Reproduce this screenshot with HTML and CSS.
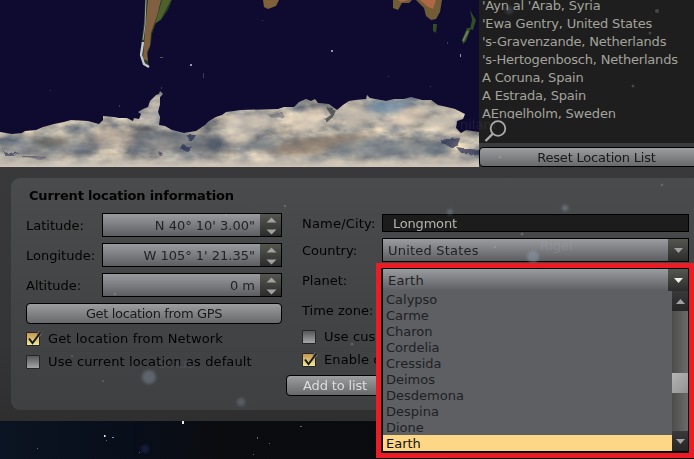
FILE: index.html
```html
<!DOCTYPE html>
<html lang="en">
<head>
<meta charset="utf-8">
<title>Location</title>
<link rel="stylesheet" href="styles.css">
</head>
<body>
<main class="window">
  <section class="top">
    <svg class="map" width="479" height="167" viewBox="0 0 479 167">
      <defs>
        <filter id="rough" x="-5%" y="-5%" width="110%" height="110%">
          <feTurbulence type="fractalNoise" baseFrequency=".14" numOctaves="3" seed="4" result="n"/>
          <feDisplacementMap in="SourceGraphic" in2="n" scale="5"/>
        </filter>
        <filter id="cloud" x="0" y="0" width="100%" height="100%" color-interpolation-filters="sRGB">
          <feTurbulence type="fractalNoise" baseFrequency=".04 .08" numOctaves="5" seed="12"/>
          <feColorMatrix values=".85 0 0 0 .22  .72 .06 0 0 .24  .5 .12 0 0 .29  0 0 0 0 1"/>
        </filter>
        <filter id="soft" x="-30%" y="-50%" width="160%" height="200%"><feGaussianBlur stdDeviation="5 2.5"/></filter>
        <filter id="smooth"><feGaussianBlur stdDeviation=".6"/></filter>
        <clipPath id="ice"><path d="M0 132L12 134 22 133 25 131 36 130 43 127 54 124 64 122 71 120 88 121 99 124 103 120 103 116 114 117 119 118 127 118 133 121 134 118 139 119 141 114 138 112 143 109 148 107 150 101 153 98 156 95 159 94 160 91 163 94 160 97 160 104 158 112 160 117 159 125 165 126 172 130 184 133 196 131 205 125 209 121 216 117 222 115 226 112 234 111 240 110 278 109 284 107 294 107 299 102 306 99 311 101 315 99 318 103 329 104 337 110 343 105 349 101 355 100 366 99 367 95 370 98 386 101 394 99 404 99 411 97 422 100 431 100 438 105 447 107 455 109 461 112 465 114 463 119 457 121 456 128 461 133 466 130 479 132V167H0Z"/></clipPath>
        <linearGradient id="edge" x2="0" y2="1"><stop offset=".65" stop-color="#cfc6b8" stop-opacity="0"/><stop offset="1" stop-color="#cfc6b8"/></linearGradient>
      </defs>
      <rect width="479" height="167" fill="#0e0a30"/>
      <g clip-path="url(#ice)">
        <rect y="85" width="479" height="82" filter="url(#cloud)"/>
        <g filter="url(#soft)">
          <path fill="#626d7c" opacity=".5" d="M0 139H85L90 156H0Z"/>
          <path fill="#6b6459" opacity=".6" d="M32 138H70L65 146H36Z"/>
          <path fill="#4b5566" opacity=".6" d="M135 133L175 131 225 140 230 153 130 150Z"/>
          <path fill="#b9a694" opacity=".5" d="M92 132L125 127 130 146 90 148Z"/>
          <path fill="#d8ccba" opacity=".6" d="M224 118L265 113 285 124 230 145Z"/>
          <path fill="#89796a" opacity=".7" d="M255 151L300 138 375 133 350 146 300 156Z"/>
          <path fill="#6f7984" opacity=".65" d="M240 141H278V150H240ZM340 141H445V155H330Z"/>
          <path fill="#ecd9c0" opacity=".7" d="M381 126L405 108 430 107 415 124ZM295 115L322 106 320 128 290 132Z"/>
          <path fill="#6d91b2" opacity=".65" d="M372 101H413L398 113 365 113Z"/>
          <path fill="#d2c6b5" opacity=".7" d="M335 110L355 101 380 120 350 130ZM420 118L457 110 458 128 425 130Z"/>
          <path fill="#c6bfb7" opacity=".6" d="M155 96L162 92 159 124 145 124Z"/>
        </g>
        <path fill="#34383e" opacity=".7" filter="url(#rough)" d="M326 107L336 110 333 117 327 122 325 119 331 115Z"/>
        <g filter="url(#rough)" fill="#202750">
          <path d="M4 152L11 154 19 152 14 156 5 156ZM22 156L34 156 47 157 44 159 22 158ZM157 151L165 154 159 155ZM182 145L192 147 187 151 180 149ZM187 135H196L193 140 188 140ZM440 140L460 138 458 144 451 147 442 144ZM456 147L479 150V155L462 154Z" opacity=".65"/>
          <path d="M268 115L282 112 285 117 271 118Z" opacity=".3"/>
        </g>
        <rect y="128" width="479" height="39" fill="url(#edge)"/>
      </g>
      <g filter="url(#smooth)">
        <path fill="#263a20" d="M145 0H172L168 10 161 20 156 23 152 34 151 43 147 56 149 66 143 65 140 54 144 22Z"/>
        <path fill="#806140" d="M148 0H161L157 16 151 33 150 46 147 52 148 61 143 59 145 31Z"/>
        <path fill="#4d602d" d="M162 0H171L161 19 155 24Z"/>
        <path fill="none" stroke="#aeb1b1" stroke-width=".9" d="M146 0L145 25 143 40"/>
        <path fill="none" stroke="#c3c8d0" stroke-width="2.3" d="M143 42L141 55 144 64 149 67"/>
        <path fill="#7e613b" d="M263 0H279L276 6 268 9 264 7Z"/>
        <path fill="#705c35" d="M393 0L412 0 409 3 402 3 398 10 393 8ZM416 0H442L440 12 436 19 431 20 426 16 424 8Z"/>
        <path fill="#af6845" d="M398 0H409L401 2ZM420 0H436L433 9 428 7Z"/>
        <path fill="#2d4f20" d="M433 24H437L436 33 433 31ZM470 10L474 17 476 20 473 30 470 29 472 20ZM467 28L471 28 466 41 463 44 462 40Z"/>
        <path stroke="#747963" stroke-width="2" d="M463 41L468 31"/>
      </g>
      <g fill="#8c99ad"><path d="M331 50h2v2h-2zM190 64h2v2h-2zM460 54h1v3h-1z"/><path fill="#4b5b3c" d="M160 57h3v1h-3z"/><path opacity=".35" d="M262 20h1v1h-1zM447 42h1v2h-1zM50 90h1v1h-1zM119 105h1v2h-1zM203 73h1v5h-1zM430 86h1v1h-1zM161 87h1v2h-1zM388 76h1v1h-1z"/></g>
    </svg>
    <div class="places">
      <ul class="place-list">
        <li>'Ayn al 'Arab, Syria</li><li>'Ewa Gentry, United States</li><li>'s-Gravenzande, Netherlands</li><li>'s-Hertogenbosch, Netherlands</li><li>A Coruna, Spain</li><li>A Estrada, Spain</li><li>AEngelholm, Sweden</li>
      </ul>
      <div class="search"><svg width="30" height="24" viewBox="0 0 30 24" fill="none" stroke="#aaa"><circle cx="15" cy="9.5" r="7.3" stroke-width="1.8"/><path d="M10 14.5L2.5 22" stroke-width="2.4"/></svg></div>
      <button class="btn reset">Reset Location List</button>
    </div>
  </section>

  <section class="panel">
    <div class="left">
      <h1>Current location information</h1>
      <div class="row"><label>Latitude:</label><div class="spin"><span>N 40° 10' 3.00"</span><i><svg width="21" height="22" viewBox="0 0 21 22"><path d="M6.5 8.5L11.5 3.5 16.5 8.5ZM6.5 15.5H16.5L11.5 20.5Z"/></svg></i></div></div>
      <div class="row"><label>Longitude:</label><div class="spin"><span>W 105° 1' 21.35"</span><i><svg width="21" height="22" viewBox="0 0 21 22"><path d="M6.5 8.5L11.5 3.5 16.5 8.5ZM6.5 15.5H16.5L11.5 20.5Z"/></svg></i></div></div>
      <div class="row"><label>Altitude:</label><div class="spin"><span>0 m</span><i><svg width="21" height="22" viewBox="0 0 21 22"><path d="M6.5 8.5L11.5 3.5 16.5 8.5ZM6.5 15.5H16.5L11.5 20.5Z"/></svg></i></div></div>
      <button class="btn gps">Get location from GPS</button>
      <div class="check net"><b class="box on"><svg width="18" height="17" viewBox="0 0 18 17"><path d="M12 4.5L14.5 1.5" fill="none" stroke="#77766a" stroke-width="4"/><path d="M3 7.5L6.5 12 14.5 1.5" fill="none" stroke="#191a20" stroke-width="2"/></svg></b>Get location from Network</div>
      <div class="check"><b class="box"></b>Use current location as default</div>
    </div>
    <div class="right">
      <div class="row name"><label class="wide">Name/City:</label><div class="input">Longmont</div></div>
      <div class="row"><label>Country:</label><div class="combo"><span>United States</span><i><svg width="20" height="22" viewBox="0 0 20 22"><path d="M6 9H15L10.5 14Z"/></svg></i></div></div>
      <div class="row"><label>Planet:</label></div>
      <div class="row zone"><label>Time zone:</label></div>
      <div class="check custom"><b class="box"></b>Use cus</div>
      <div class="check"><b class="box on"><svg width="18" height="17" viewBox="0 0 18 17"><path d="M12 4.5L14.5 1.5" fill="none" stroke="#77766a" stroke-width="4"/><path d="M3 7.5L6.5 12 14.5 1.5" fill="none" stroke="#191a20" stroke-width="2"/></svg></b>Enable c</div>
      <button class="btn add">Add to list</button>
    </div>
  </section>
</main>

<svg class="sky" width="694" height="459" viewBox="0 0 694 459">
  <defs><filter id="glow"><feGaussianBlur stdDeviation="1.5"/></filter></defs>
  <g fill="#9caec0" filter="url(#glow)"><circle cx="149" cy="377" r="7" opacity=".32"/><circle cx="241" cy="402" r="4" opacity=".28"/><circle cx="533" cy="257" r="6" opacity=".4"/><circle cx="450" cy="212" r="3" opacity=".3"/><circle cx="565" cy="208" r="3" opacity=".4"/><circle cx="145" cy="449" r="4" fill="#304078" opacity=".35"/><circle cx="509" cy="10" r="4" opacity=".2"/></g>
  <g fill="#b9c0c6" opacity=".25"><circle cx="285" cy="206" r="1.3"/><circle cx="72" cy="356" r="1"/><circle cx="103" cy="381" r="1"/><circle cx="352" cy="344" r="1.5"/><circle cx="522" cy="234" r="1.5"/><circle cx="662" cy="185" r="1.3"/><circle cx="657" cy="11" r="2"/><circle cx="650" cy="33" r="1.5"/><circle cx="633" cy="86" r="1.5"/><circle cx="500" cy="157" r="1.5"/><circle cx="115" cy="294" r="1.3"/><circle cx="226" cy="215" r="1.2"/><circle cx="495" cy="247" r="1.2"/></g>
  <g fill="#e8ecef"><path d="M182 421h2v3h-2zM104 435h1.5v2h-1.5z"/><path d="M112 437h2v1h-2z" fill="#6798dd"/><path opacity=".4" d="M37 448h1v1h-1zM300 426h2v1h-2zM257 437h1v2h-1zM269 443h1v1h-1zM253 454h1v1h-1zM139 452h1v1h-1zM106 440h1v1h-1z"/></g>
  <text x="158" y="368" opacity=".5">Sirius</text><text x="540" y="250">Rigel</text><text x="460" y="129" opacity=".4">nilam</text>
</svg>

<div class="popup">
  <div class="combo"><span>Earth</span><i class="lit"><svg width="20" height="22" viewBox="0 0 20 22"><path d="M6 9H15L10.5 14Z"/></svg></i></div>
  <div class="drop">
    <ul><li>Calypso</li><li>Carme</li><li>Charon</li><li>Cordelia</li><li>Cressida</li><li>Deimos</li><li>Desdemona</li><li>Despina</li><li>Dione</li><li class="sel">Earth</li></ul>
    <div class="bar">
      <svg width="16" height="20" viewBox="0 0 16 20"><path d="M4 13H13L8.5 8Z"/></svg>
      <div class="track"><div class="thumb"></div></div>
      <svg width="16" height="20" viewBox="0 0 16 20"><path d="M4 8H13L8.5 13Z"/></svg>
    </div>
  </div>
</div>
</body>
</html>
```
FILE: styles.css
```css
* { box-sizing: border-box; }
body {
  margin: 0; width: 694px; height: 459px; overflow: hidden; position: relative;
  background: linear-gradient(90deg, #0b1422 0, #080e1a 130px, #0b0c10 220px, #090a0c 100%);
  font: 13px/16px "DejaVu Sans", sans-serif; color: #030303;
}
ul { list-style: none; margin: 0; padding: 0; }
.window { height: 421px; background: linear-gradient(#3d3e41 0, #39393c 170px, #343537 340px, #2f2f30 421px); }
.top { display: flex; height: 167px; }
.map { display: block; flex: none; }
.places { width: 215px; display: flex; flex-direction: column; background: #3b3c3e; white-space: nowrap; }
.place-list {
  display: flex; flex-direction: column; justify-content: flex-end; height: 119px; padding-left: 3px;
  overflow: hidden; background: #1e1e1e; color: #a3a39c; letter-spacing: -.2px;
}
.place-list li { flex: none; height: 18px; line-height: 18px; }
.place-list li:last-child { height: 14px; }
.search { height: 24px; padding-left: 4px; background: #1e1e1e; }
.search svg { display: block; }
.btn {
  display: block; height: 21px; padding: 0; border: 1px solid #000; border-radius: 4px;
  background: linear-gradient(#9b9d9f, #68696b); font: inherit; line-height: 19px; color: #1a1a1c; text-align: center;
}
.reset { width: 235px; margin-top: 4px; height: 20px; letter-spacing: -.2px; }
.panel {
  display: flex; height: 232px; margin: 11px 0 0 11px; padding-left: 15px;
  border-radius: 9px 0 0 9px; background: linear-gradient(#4a4b4d, #434446 55%, #3f4042); white-space: nowrap;
}
.left { width: 256px; }
h1 { margin: 9px 0 9px 3px; font-size: 13px; line-height: 17px; height: 17px; font-weight: bold; letter-spacing: -.17px; }
.row { display: flex; height: 24px; margin-bottom: 6px; align-items: center; }
.row label { flex: none; }
.left label { width: 76px; padding-top: 1px; }
.spin { display: flex; width: 180px; height: 24px; border: 1px solid #000; background: linear-gradient(#9a9b9e, #5d5e61); color: #222327; }
.spin span { flex: 1; text-align: right; padding-right: 5px; line-height: 24px; }
i { display: block; background: linear-gradient(#55564f, #2c2c2c); fill: #a0a1a3; }
i svg { display: block; }
.gps { width: 256px; letter-spacing: -.35px; }
.check { display: flex; height: 15px; line-height: 16px; align-items: center; margin-bottom: 8px; letter-spacing: .13px; }
.net { margin-top: 7px; }
.box { flex: none; width: 14px; height: 14px; border: 1px solid #252627; border-radius: 1px; margin-right: 8px; background: linear-gradient(#555658, #a4a5a7); }
.on { background: linear-gradient(#c3964c, #f1e895); }
.on svg { display: block; margin: -2px 0 0 -1px; }
.right { width: 412px; padding: 36px 0 0 20px; }
.right label { width: 80px; padding-top: 1px; }
.right .wide { letter-spacing: .2px; }
.name { height: 18px; margin-bottom: 6px; }
.input { width: 307px; height: 18px; border: 1px solid #000; background: #1c1c1c; color: #b3b3ad; padding-left: 10px; line-height: 18px; letter-spacing: -.2px; }
.combo { display: flex; width: 307px; height: 24px; border: 1px solid #000; background: linear-gradient(#9b9c9f, #5d5e61); color: #1f2024; letter-spacing: .2px; }
.combo span { flex: 1; padding-left: 5px; line-height: 24px; }
.lit { fill: #f0f0e6; }
.zone { margin-bottom: 7px; }
.custom { margin-bottom: 8px; }
.add { width: 98px; margin-left: -16px; color: #ddd; letter-spacing: -.15px; }
.sky { position: absolute; inset: 0; pointer-events: none; }
.sky text { font: 13px "DejaVu Sans", sans-serif; fill: #a6a9bb; fill-opacity: .28; }
.popup { position: absolute; left: 376px; top: 263px; width: 318px; height: 195px; border: 5px solid #ed1c24; background: #0a0a0c; padding-left: 1px; overflow: hidden; }
.drop { display: flex; width: 307px; height: 161px; border: solid #000; border-width: 0 1px 1px; margin-top: -1px; }
.drop ul { width: 289px; background: #5d5f62; color: #202124; }
.drop li { height: 16px; padding-left: 3px; line-height: 17px; }
.drop .sel { background: #fdd785; color: #111; }
.bar { width: 16px; }
.bar > svg { display: block; background: linear-gradient(#39393c, #262626); fill: #a2a2a4; }
.track { height: 120px; padding-top: 62px; background: linear-gradient(90deg, #4c4c4b, #6b6b6b); }
.thumb { height: 20px; background: linear-gradient(135deg, #b5b5b5, #929292); }
```
